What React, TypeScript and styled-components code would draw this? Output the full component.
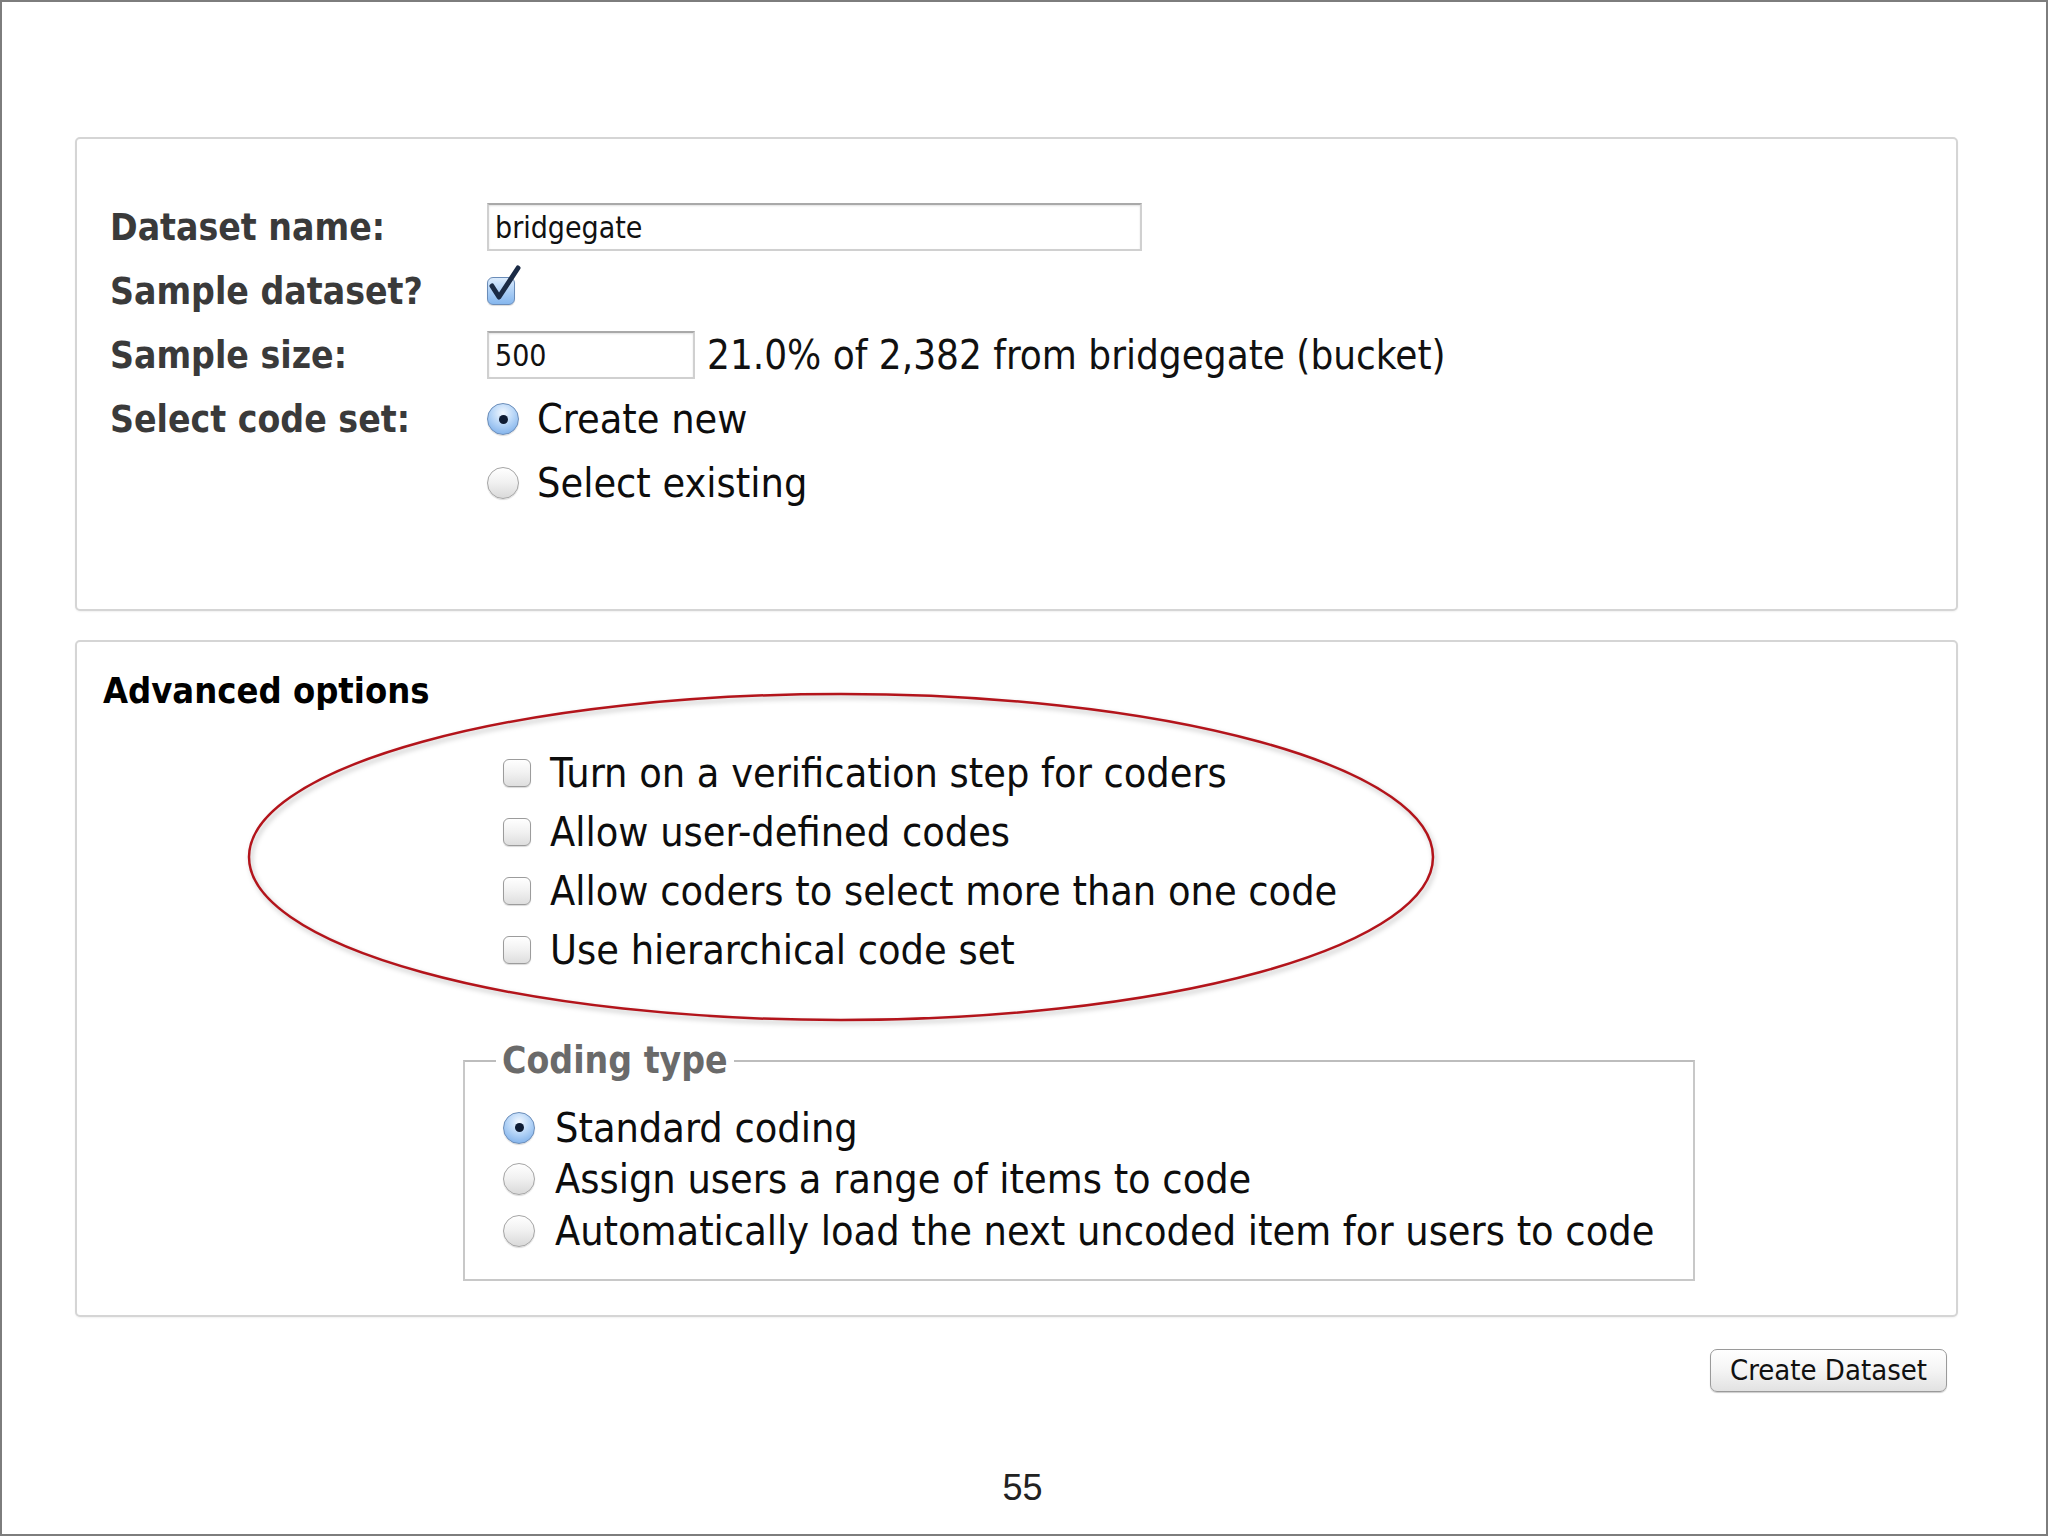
import React from "react";
import styled, { createGlobalStyle } from "styled-components";

const SANS = `"DejaVu Sans Condensed", "DejaVu Sans", Verdana, sans-serif`;

const GlobalStyle = createGlobalStyle`
  html, body {
    margin: 0;
    padding: 0;
    background: #fff;
  }

  * {
    box-sizing: border-box;
  }
`;

const Slide = styled.div`
  width: 2048px;
  height: 1536px;
  overflow: hidden;
  padding: 135px 88px 0 73px;

  border: 2px solid #7d7d7d;
  background: #fff;
  font-family: ${SANS};
`;

const Panel = styled.section`
  position: relative;
  border: 2px solid #d5d5d5;
  border-radius: 5px;
  background: #fff;
  box-shadow: 0 1px 2px rgba(0, 0, 0, 0.06);
`;

const MainPanel = styled(Panel)`
  padding: 64px 0 102px 33px;
`;

const AdvancedPanel = styled(Panel)`
  margin-top: 29px;
  padding: 27px 0 34px 26px;
`;

const FormGrid = styled.div`
  display: grid;
  grid-template-columns: 377px 1fr;
  grid-auto-rows: 48px;
  row-gap: 16px;
  align-items: center;
`;

const Label = styled.div`
  font-size: 37px;
  font-weight: bold;
  color: #3a3a3a;
  white-space: nowrap;
`;

const Value = styled.div`
  display: flex;
  align-items: center;
  font-size: 40px;
  color: #111;
  white-space: nowrap;
`;

const TextInput = styled.input<{ $w: number }>`
  width: ${(p) => p.$w}px;
  height: 48px;
  padding: 0 6px;

  border: 2px solid #d0d0d0;
  border-top-color: #a9a9a9;
  box-shadow: inset 0 1px 2px rgba(0, 0, 0, 0.12);
  background: #fff;
  outline: none;

  font-family: ${SANS};
  font-size: 30px;
  color: #111;
`;

const Note = styled.span`
  margin-left: 12px;
`;

const Option = styled.label<{ $gap: number }>`
  display: flex;
  align-items: center;
  gap: ${(p) => p.$gap}px;
  font-size: 41px;
  color: #0d0d0d;
  white-space: nowrap;
`;

const Box = styled.span<{ $checked?: boolean }>`
  position: relative;
  flex: none;
  display: inline-block;
  width: 28px;
  height: 28px;
  border-radius: 6px;
  border: 1.5px solid ${(p) => (p.$checked ? "#6a8cb8" : "#9c9c9c")};
  background: ${(p) =>
    p.$checked
      ? "linear-gradient(#dcecfd, #a9cdf5 55%, #86b7ee)"
      : "linear-gradient(#ffffff, #f1f1f1 50%, #dedede)"};
  box-shadow: 0 1px 1px rgba(0, 0, 0, 0.15);

  svg {
    position: absolute;
    left: -2px;
    top: -12px;
    overflow: visible;
  }
`;

const Radio = styled.span<{ $checked?: boolean }>`
  position: relative;
  flex: none;
  display: inline-block;
  width: 32px;
  height: 32px;
  border-radius: 50%;
  border: 1.5px solid ${(p) => (p.$checked ? "#6b8db9" : "#a5a5a5")};
  background: ${(p) =>
    p.$checked
      ? "radial-gradient(circle at 50% 30%, #f2f8ff 0%, #b6d5f7 45%, #6ea5e6 100%)"
      : "linear-gradient(#ffffff, #f0f0f0 50%, #d9d9d9)"};
  box-shadow: 0 1px 1px rgba(0, 0, 0, 0.15);

  &::after {
    content: "";
    display: ${(p) => (p.$checked ? "block" : "none")};
    position: absolute;
    left: 50%;
    top: 50%;
    width: 9px;
    height: 9px;
    margin: -4.5px 0 0 -4.5px;
    border-radius: 50%;
    background: #0f1c33;
  }
`;

const Heading = styled.h2`
  margin: 0;
  font-size: 36px;
  line-height: 44px;
  font-weight: bold;
  color: #000;
`;

const CheckList = styled.div`
  display: flex;
  flex-direction: column;
  margin: 30px 0 0 400px;
`;

const CheckRow = styled.div`
  display: flex;
  align-items: center;
  height: 59px;
`;

const CodingSet = styled.fieldset`
  width: 1232px;
  min-inline-size: 0;
  margin: 60px 0 0 360px;
  padding: 19px 0 22px 31px;
  border: 2px solid #c8c8c8;
  border-top-color: #bdbdbd;
`;

const Legend = styled.legend`
  padding: 0 6px;
  font-size: 37px;
  line-height: 44px;
  font-weight: bold;
  color: #6a6a6a;
`;

const RadioRow = styled.div`
  display: flex;
  align-items: center;
  height: 51.5px;
  padding-left: 7px;
`;

const Highlight = styled.svg`
  position: absolute;
  left: 150px;
  top: 40px;
  pointer-events: none;
`;

const Actions = styled.div`
  display: flex;
  justify-content: flex-end;
  margin-top: 32px;
  padding-right: 11px;
`;

const Button = styled.button`
  width: 237px;
  height: 43px;
  padding: 0;

  border: 1.5px solid #9a9a9a;
  border-radius: 7px;
  background: linear-gradient(#ffffff, #f4f4f4 50%, #e2e2e2);
  box-shadow: 0 1px 1px rgba(0, 0, 0, 0.2);

  font-family: ${SANS};
  font-size: 29px;
  color: #111;
`;

const PageNumber = styled.div`
  margin-top: 75px;
  padding-left: 12px;
  text-align: center;
  font-family: "Liberation Sans", Arial, sans-serif;
  font-size: 36px;
  color: #222;
`;

const CheckMark = () => (
  <svg width="36" height="40" viewBox="0 0 36 40">
    <path
      d="M6 20 L13 31 L32 2"
      fill="none"
      stroke="#1b2b45"
      strokeWidth="5"
      strokeLinecap="round"
      strokeLinejoin="round"
    />
  </svg>
);

const CheckBox = ({ checked }: { checked?: boolean }) => (
  <Box $checked={checked}>{checked && <CheckMark />}</Box>
);

const ADVANCED = [
  "Turn on a verification step for coders",
  "Allow user-defined codes",
  "Allow coders to select more than one code",
  "Use hierarchical code set",
];

const CODING_TYPES = [
  "Standard coding",
  "Assign users a range of items to code",
  "Automatically load the next uncoded item for users to code",
];

const App = () => {
  return (
    <>
      <GlobalStyle />
      <Slide>
        <MainPanel>
          <FormGrid>
            <Label>Dataset name:</Label>
            <Value>
              <TextInput $w={655} defaultValue="bridgegate" readOnly />
            </Value>

            <Label>Sample dataset?</Label>
            <Value>
              <CheckBox checked />
            </Value>

            <Label>Sample size:</Label>
            <Value>
              <TextInput $w={208} defaultValue="500" readOnly />
              <Note>21.0% of 2,382 from bridgegate (bucket)</Note>
            </Value>

            <Label>Select code set:</Label>
            <Option $gap={18}>
              <Radio $checked />
              Create new
            </Option>

            <span />
            <Option $gap={18}>
              <Radio />
              Select existing
            </Option>
          </FormGrid>
        </MainPanel>

        <AdvancedPanel>
          <Heading>Advanced options</Heading>

          <CheckList>
            {ADVANCED.map((text) => (
              <CheckRow key={text}>
                <Option $gap={19}>
                  <CheckBox />
                  {text}
                </Option>
              </CheckRow>
            ))}
          </CheckList>

          <CodingSet>
            <Legend>Coding type</Legend>
            {CODING_TYPES.map((text, i) => (
              <RadioRow key={text}>
                <Option $gap={20}>
                  <Radio $checked={i === 0} />
                  {text}
                </Option>
              </RadioRow>
            ))}
          </CodingSet>

          <Highlight width="1240" height="360" viewBox="0 0 1240 360">
            <defs>
              <filter id="soft" x="-5%" y="-5%" width="110%" height="110%">
                <feGaussianBlur stdDeviation="2.5" />
              </filter>
            </defs>
            <ellipse
              cx="616"
              cy="178"
              rx="592"
              ry="163"
              fill="none"
              stroke="rgba(0,0,0,0.22)"
              strokeWidth="3"
              filter="url(#soft)"
            />
            <ellipse
              cx="614"
              cy="175"
              rx="592"
              ry="163"
              fill="none"
              stroke="#b3141b"
              strokeWidth="2.5"
            />
          </Highlight>
        </AdvancedPanel>

        <Actions>
          <Button type="button">Create Dataset</Button>
        </Actions>

        <PageNumber>55</PageNumber>
      </Slide>
    </>
  );
};

export default App;
